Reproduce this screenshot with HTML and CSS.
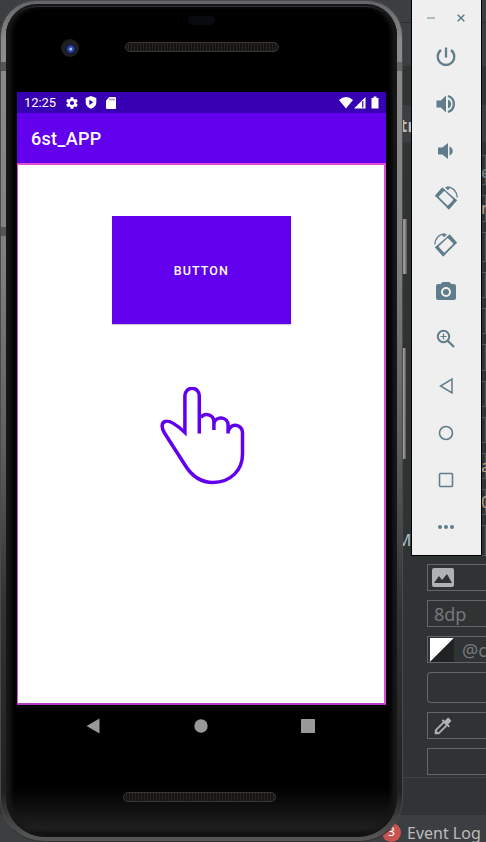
FILE: index.html
```html
<!DOCTYPE html>
<html lang="en">
<head>
<meta charset="utf-8">
<title>6st_APP</title>
<link rel="stylesheet" href="styles.css">
</head>
<body>
<main class="desktop">
  <section class="ide">
    <div class="band tabs"></div>
    <div class="band tools"></div>
    <div class="band gap"></div>
    <div class="band header"><b>tr</b></div>
    <div class="attributes">
      <div class="rows"><i class="tall">e</i><i class="warm">n</i><i class="tall"></i><i></i><i></i><i></i><i></i><i></i><i class="warm">a</i><i class="warm">0</i><i class="tall"></i></div>
      <span class="cut-label">M.</span>
      <div class="fields">
        <div class="field"><svg width="22" height="19" viewBox="0 0 22 19"><rect width="22" height="19" rx="2" fill="#afb1b3"/><path d="M2 15l5-7 3 4 5-6 5 9z" fill="#2f3334"/></svg></div>
        <div class="field text">8dp</div>
        <div class="field text color"><svg width="24" height="24" viewBox="0 0 24 24"><path fill="#fff" d="M0 0h24L0 24z"/><path fill="#202224" d="M24 0v24H0z"/></svg>@c</div>
        <div class="field combo"></div>
        <div class="field"><svg width="22" height="22" viewBox="0 0 24 24"><path fill="#afb1b3" d="M20.700 5.600l-2.300-2.300a1 1 0 0 0-1.400 0l-3.100 3.100-2-1.900-1.400 1.400 1.400 1.400L3 16.300V21h4.700l9-8.900 1.400 1.400 1.400-1.400-1.900-1.900L20.700 7c.4-.4.4-1 0-1.400zM6.900 19L5 17.100l8.100-8.100 1.900 1.900z"/></svg></div>
        <div class="field"></div>
      </div>
    </div>
    <div class="band bottom"></div>
    <div class="status-line"><span class="count">3</span><span>Event Log</span></div>
  </section>

  <span class="side-key power"></span>
  <span class="side-key volume"></span>

  <section class="phone">
    <div class="glass">
      <div class="forehead">
        <span class="sensor"></span>
        <span class="camera"></span>
        <span class="speaker"></span>
      </div>
      <div class="screen">
        <div class="status">
          <span class="clock">12:25</span>
          <svg class="gear" width="14" height="14" viewBox="0 0 24 24"><path fill="#fff" fill-rule="evenodd" d="M19.400 13c.1-.7.1-1.300 0-2l2.100-1.600c.2-.2.300-.4.100-.7l-2-3.400c-.1-.3-.4-.3-.6-.2l-2.500 1c-.5-.4-1.100-.7-1.700-1L14.400 2.400c0-.2-.2-.4-.4-.4h-4c-.3 0-.5.2-.5.4l-.4 2.700c-.6.300-1.200.6-1.700 1l-2.500-1c-.2-.1-.5 0-.6.2l-2 3.400c-.1.300-.1.500.1.700L4.600 11v2l-2.200 1.600c-.2.200-.2.400-.1.700l2 3.400c.1.200.4.300.6.200l2.500-1c.5.400 1.100.7 1.700 1l.4 2.700c0 .2.200.4.500.4h4c.2 0 .4-.2.400-.4l.4-2.700c.6-.3 1.200-.6 1.700-1l2.500 1c.2.1.5 0 .6-.2l2-3.400c.1-.3.1-.5-.1-.7zM12 15.500a3.500 3.500 0 1 1 0-7 3.500 3.500 0 0 1 0 7z"/></svg>
          <svg class="shield" width="12" height="13" viewBox="0 0 12 13"><path fill="#fff" d="M6 0l5.300 2v4.300c0 3-2.200 5.600-5.300 6.500C2.900 11.900.7 9.300.7 6.300V2z"/><path fill="#3700b3" d="M4.300 3.700v5.200l4-2.600z"/></svg>
          <svg class="card" width="10" height="12" viewBox="0 0 10 12"><path fill="#fff" d="M3.300 0H9q1 0 1 1v10q0 1-1 1H1q-1 0-1-1V3.500z"/><path stroke="#3700b3" stroke-width=".7" d="M4 1.500v2M6 1.500v2M8 1.500v2"/></svg>
          <span class="radios">
            <svg width="14" height="12" viewBox="0 0 14 12"><path fill="#fff" d="M0 3Q7-3 14 3L7 11.600z"/></svg>
            <svg width="12" height="12" viewBox="0 0 12 12"><path fill="#fff" d="M11.500 0v11.500H0z"/><path stroke="#3700b3" stroke-width="1.200" d="M8.800 4v6.500"/></svg>
            <svg class="battery" width="8" height="13" viewBox="0 0 8 13"><path fill="#fff" d="M2.500.5h3V2H7.500v10.500H.5V2h2z"/></svg>
          </span>
        </div>
        <div class="appbar">6st_APP</div>
        <div class="content">
          <button class="button">BUTTON</button>
          <svg class="hand" width="86" height="100" viewBox="0 0 86 100" fill="none" stroke="#6200ee" stroke-width="3.500"><path d="M39.300 46.500V8.500a7.200 7.200 0 0 0-14.400 0V45.500C17 38 9 32.800 5 34.500 1 36 1.500 41 4.500 46L25 78c7 11.500 17 17.500 28 17.500 18 0 29.500-13 29.500-28V46a7.200 7.200 0 0 0-14.400-1v1.500V38a7.200 7.200 0 0 0-14.200-1.500V43V34.500a7.200 7.200 0 0 0-13-4"/></svg>
        </div>
      </div>
      <div class="nav">
        <svg width="14" height="16" viewBox="0 0 14 16"><path fill="#999" d="M13.500.5v15L.5 8z"/></svg>
        <svg width="14" height="14" viewBox="0 0 14 14"><circle cx="7" cy="7" r="6.700" fill="#999"/></svg>
        <svg width="14" height="14" viewBox="0 0 14 14"><rect width="14" height="14" rx=".5" fill="#999"/></svg>
      </div>
      <span class="speaker low"></span>
    </div>
  </section>

  <aside class="emulator-bar">
    <div class="window-keys">
      <svg width="8" height="10" viewBox="0 0 8 10"><path stroke="#9cb0b9" stroke-width="1.600" d="M0 5h8"/></svg>
      <svg width="8" height="8" viewBox="0 0 8 8"><path stroke="#607d8b" stroke-width="1.500" d="M.7.7l6.600 6.600M7.300.7L.7 7.300"/></svg>
    </div>
    <div class="key"><svg viewBox="0 0 24 24"><path class="l" stroke-width="2.300" d="M12 2.500v10M7 5a8.300 8.300 0 1 0 10 0"/></svg></div>
    <div class="key"><svg viewBox="0 0 24 24"><path d="M2.500 8.500h4.300L12 3.500v17l-5.200-5H2.500zM14 7.500q3.200 1.500 3.200 4.500T14 16.500z"/><path class="l" stroke-width="2.300" d="M14 4a8.400 8.400 0 0 1 0 16"/></svg></div>
    <div class="key"><svg viewBox="0 0 24 24"><path d="M4 8.500h4.300L14 4v16l-5.700-4.500H4zM15.500 7.500q3.200 1.500 3.200 4.500t-3.200 4.500z"/></svg></div>
    <div class="key"><svg viewBox="0 0 24 24"><g id="turn"><path fill-rule="evenodd" d="M8.300 1.500L23 14.200 14.800 23.500 1 9.700zM5.500 7.500L3.500 9.700 14 20 20 14 9.600 4.200z"/><path d="M8.300 1.500L11.300 4 3.600 12 1 9.700zM14.800 23.500L12.300 21 20.300 12.300 23 14.200z"/><path class="hole" d="M9.600 5.800L18.800 14.600 14.400 19 5.200 10.200z"/><path class="l" stroke-width="1.300" d="M13 .9c6 .2 10 4.500 10.200 10.600"/><path d="M10.800.9l6.200.4-3.200 3z"/></g></svg></div>
    <div class="key"><svg viewBox="0 0 24 24"><use href="#turn" transform="matrix(-1 0 0 1 24 0)"/></svg></div>
    <div class="key"><svg viewBox="0 0 24 24"><path fill-rule="evenodd" d="M8.500 2h7l1.800 2H20q2 0 2 2v12q0 2-2 2H4q-2 0-2-2V6q0-2 2-2h2.700zM12 7a5 5 0 1 0 0 10 5 5 0 0 0 0-10z"/><circle cx="12" cy="12" r="3"/></svg></div>
    <div class="key"><svg viewBox="0 0 24 24"><circle class="l" cx="9.500" cy="9.500" r="5.700" stroke-width="2"/><path class="l" stroke-width="2.300" d="M13.500 13.500l6.500 6.500"/><path class="l" stroke-width="1.200" d="M9.500 6.500v6M6.500 9.500h6"/></svg></div>
    <div class="key"><svg viewBox="0 0 24 24"><path class="l" stroke-width="1.500" d="M18 5v14L6.500 12z"/></svg></div>
    <div class="key"><svg viewBox="0 0 24 24"><circle class="l" stroke-width="1.600" cx="12" cy="12" r="6.500"/></svg></div>
    <div class="key"><svg viewBox="0 0 24 24"><rect class="l" stroke-width="1.600" x="5.500" y="5.500" width="13" height="13" rx="1"/></svg></div>
    <div class="key"><svg viewBox="0 0 24 24"><circle cx="6" cy="12" r="2"/><circle cx="12" cy="12" r="2"/><circle cx="18" cy="12" r="2"/></svg></div>
  </aside>
</main>
</body>
</html>
```
FILE: styles.css
```css
* { box-sizing: border-box; }
body { margin: 0; background: #3c3f41; }
svg { display: block; flex: none; }

.desktop { position: relative; width: 486px; height: 842px; overflow: hidden; }

/* IDE behind the emulator */
.ide { display: flex; flex-direction: column; height: 842px; font-family: "Noto Sans", sans-serif; color: #bbb; }
.band { flex: none; background: #3c3f41; }
.tabs { height: 23px; border-bottom: 1px solid #2b2d2e; }
.tools { height: 43px; }
.gap { height: 39px; background: #313435; }
.header { height: 38px; padding-left: 400px; font-size: 17px; line-height: 41px; border-bottom: 1px solid #343739; }
.attributes { position: relative; height: 635px; background: #2f3334; padding-top: 12px; border-bottom: 1px solid #414445; }
.rows { display: flex; flex-direction: column; gap: 10px; margin-left: 470px; height: 409px; }
.rows i { flex: none; height: 26.200px; padding-left: 10px; border: 1px solid #555859; font: 17px/23px "Noto Sans", sans-serif; color: #6b8795; }
.rows .tall { height: 30.400px; line-height: 32px; }
.rows .warm { color: #bda680; }
.cut-label { position: absolute; left: 396px; top: 385px; font-size: 17px; color: #a5bdca; }
.fields { display: flex; flex-direction: column; gap: 9px; margin-left: 427px; }
.field { display: flex; align-items: center; height: 27px; padding-left: 4px; border: 1px solid #646668; border-right: 0; }
.field.text { padding-left: 6px; font-size: 18px; color: #76797a; }
.field.color { padding-left: 2px; gap: 8px; }
.field.combo { height: 31px; border-radius: 4px 0 0 4px; }
.bottom { height: 37px; background: #313335; }
.status-line { display: flex; align-items: center; gap: 6px; height: 27px; padding: 8px 0 0 382px; background: #3c3f41; font-size: 16px; white-space: nowrap; }
.count { width: 19px; height: 19px; border-radius: 50%; background: #c75450; color: #fff; font-size: 12px; line-height: 18px; text-align: center; }

/* Phone */
.side-key { position: absolute; background: linear-gradient(90deg, #606060, #a0a0a0 60%, #555); border: solid #303030; border-width: 2px 0; }
.power { left: 400px; top: 217px; width: 7px; height: 59px; }
.volume { left: 400px; top: 346px; width: 6px; height: 115px; }
.phone { position: absolute; left: 0; top: 0; width: 403px; height: 842px; padding: 3px 5px 4px; border-radius: 36px 36px 43px 43px; border: 1px solid #4a4a4a; border-bottom-color: #333;
  background:
    linear-gradient(#555, #555) 0 61px / 5px 9px no-repeat,
    linear-gradient(#666, #666) 100% 61px / 5px 9px no-repeat,
    linear-gradient(#555, #555) 0 226px / 5px 9px no-repeat,
    linear-gradient(#666 0, #8c8c8c 5%, #808080 30%, #606060 52%, #333 72%, #202020 94%, #555 99.500%); }
.glass { height: 833px; border-radius: 31px 31px 39px 39px; border-top: 2px solid #15171c; overflow: hidden; padding: 0 11px;
  box-shadow: inset 5px 0 4px #181818, inset -5px 0 4px #181818, inset 0 1px 0 #65656d;
  background: linear-gradient(#000 0, #000 94%, #1f1f1f 99%, #090909 100%); }
.forehead { position: relative; height: 86px; }
.speaker { display: block; width: 154px; height: 10px; border: 1px solid #393834; border-radius: 5px; background: repeating-linear-gradient(90deg, #151412 0 2px, #292622 2px 3px); }
.forehead .speaker { position: absolute; left: 108px; top: 36px; }
.sensor { position: absolute; left: 171px; top: 10px; width: 27px; height: 9px; border-radius: 5px; background: #080a10; }
.camera { position: absolute; left: 44px; top: 33px; width: 18px; height: 18px; border-radius: 50%; background: radial-gradient(circle at 54% 56%, #a7c0ff 0 1px, #2947a0 2px 3px, #0b1028 5px, #232225 6px, #1e1d1e 8px); }
.screen { width: 369px; font-family: Roboto, sans-serif; color: #fff; }
.status { display: flex; align-items: center; height: 21px; padding: 0 7px; background: #3700b3; }
.clock { width: 41px; font-size: 13px; letter-spacing: -.1px; }
.shield { margin-left: 6px; }
.card { margin-left: 9px; }
.radios { display: flex; align-items: center; gap: 1px; margin-left: auto; }
.battery { margin-left: 4px; }
.appbar { height: 50px; padding-left: 14px; background: #6200ee; font-size: 18px; font-weight: 500; line-height: 52px; letter-spacing: .3px; }
.content { display: flex; flex-direction: column; align-items: flex-start; height: 542px; background: #fff; border: 1px solid #e14bd2; border-width: 2px 2px 2px 1px; border-bottom-color: #b23cc0; }
.button { width: 179.300px; height: 108px; margin: 51px 0 0 93.700px; padding: 0; border: 0; background: #6200ee; color: #fff; font: 500 12.500px Roboto, sans-serif; letter-spacing: 1.100px; box-shadow: 0 1px 1px #ccc; }
.hand { margin: 63px 0 0 142.400px; }
.nav { display: flex; align-items: center; justify-content: space-between; height: 42px; padding: 0 71px 0 69px; }
.low { width: 153px; margin: 45px 0 0 106px; }

/* Emulator toolbar */
.emulator-bar { position: absolute; left: 411px; top: -1px; width: 71px; height: 557px; border: 1px solid #000; background: #efefef; }
.window-keys { display: flex; align-items: center; justify-content: space-between; height: 33px; padding: 3px 16px 0 15px; }
.key { display: flex; align-items: center; justify-content: center; height: 47px; padding-right: 1px; }
.key svg { width: 24px; height: 24px; fill: #607d8b; overflow: visible; }
.key .l { fill: none; stroke: #607d8b; }
.key .hole { fill: #efefef; }
```
